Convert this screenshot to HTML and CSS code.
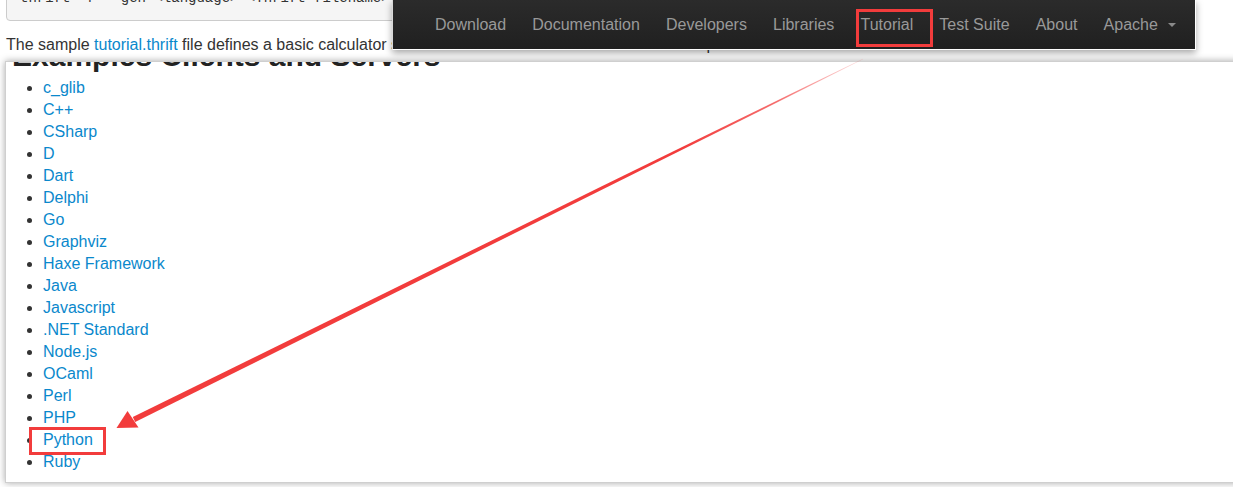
FILE: index.html
```html
<!DOCTYPE html>
<html lang="en">
<head>
<meta charset="utf-8">
<title>Thrift Tutorial</title>
<link rel="stylesheet" href="styles.css">
</head>
<body>
<div class="page">
  <div class="doc">
    <pre class="cmd">thrift -r --gen &lt;language&gt; &lt;Thrift filename&gt;</pre>
    <p class="intro">The sample <a href="#">tutorial.thrift</a> file defines a basic calculator service. The client and server code below implement it.</p>
  </div>

  <section class="panel">
    <h2 class="panel-title">Examples Clients and Servers</h2>
    <ul class="langs">
      <li><a href="#">c_glib</a></li>
      <li><a href="#">C++</a></li>
      <li><a href="#">CSharp</a></li>
      <li><a href="#">D</a></li>
      <li><a href="#">Dart</a></li>
      <li><a href="#">Delphi</a></li>
      <li><a href="#">Go</a></li>
      <li><a href="#">Graphviz</a></li>
      <li><a href="#">Haxe Framework</a></li>
      <li><a href="#">Java</a></li>
      <li><a href="#">Javascript</a></li>
      <li><a href="#">.NET Standard</a></li>
      <li><a href="#">Node.js</a></li>
      <li><a href="#">OCaml</a></li>
      <li><a href="#">Perl</a></li>
      <li><a href="#">PHP</a></li>
      <li><a href="#">Python</a></li>
      <li><a href="#">Ruby</a></li>
    </ul>
  </section>

  <nav class="navbar">
    <a class="nav-link" href="#">Download</a>
    <a class="nav-link" href="#">Documentation</a>
    <a class="nav-link" href="#">Developers</a>
    <a class="nav-link" href="#">Libraries</a>
    <a class="nav-link" href="#">Tutorial</a>
    <a class="nav-link" href="#">Test Suite</a>
    <a class="nav-link" href="#">About</a>
    <a class="nav-link nav-dropdown" href="#">Apache<span class="caret"></span></a>
  </nav>

  <svg class="annot" width="1233" height="487" viewBox="0 0 1233 487" aria-hidden="true">
    <defs>
      <linearGradient id="fade" gradientUnits="userSpaceOnUse" x1="863" y1="59" x2="134" y2="420">
        <stop offset="0" stop-color="#f23c3c" stop-opacity="0.15"/>
        <stop offset="0.12" stop-color="#f23c3c" stop-opacity="0.75"/>
        <stop offset="0.25" stop-color="#f23c3c" stop-opacity="1"/>
        <stop offset="1" stop-color="#f23c3c" stop-opacity="1"/>
      </linearGradient>
    </defs>
    <rect x="857.5" y="10.5" width="74" height="35" fill="none" stroke="#f23c3c" stroke-width="3"/>
    <rect x="30.5" y="428.5" width="74" height="25" fill="none" stroke="#f23c3c" stroke-width="3"/>
    <polygon fill="url(#fade)" points="862.9,58.8 789.96,94.2 600.80,186.8 132.8,417.04 135.2,421.96 602.40,189.6 790.84,95.6 863.1,59.2"/>
    <polygon fill="#f23c3c" points="116.5,428 138.5,427.5 127.5,411"/>
  </svg>
</div>
</body>
</html>
```

FILE: styles.css
```css
html, body {
  margin: 0;
  padding: 0;
  background: #ffffff;
  overflow: hidden;
}

body {
  font-family: "Liberation Sans", Arial, sans-serif;
  font-size: 16px;
  line-height: 22px;
  color: #333333;
}

a {
  color: #0a88cc;
  text-decoration: none;
}

.page {
  position: relative;
  width: 1233px;
  height: 487px;
  overflow: hidden;
}

.doc {
  padding-left: 6px;
}

.cmd {
  margin: -23px 0 0 0;
  width: 1150px;
  padding: 10px 13px 12px 13px;
  font-family: "Liberation Mono", "Courier New", monospace;
  font-size: 14px;
  line-height: 20px;
  color: #333333;
  background: #f5f5f5;
  border: 1px solid #cccccc;
  border-radius: 4px;
  box-sizing: border-box;
  white-space: pre;
}

.intro {
  margin: 13px 0 5px 0;
  white-space: nowrap;
}

.panel {
  margin-left: 5px;
  margin-right: -20px;
  background: #ffffff;
  border: 1px solid #cfcfcf;
  box-shadow: 0 0 7px rgba(0, 0, 0, 0.35);
  overflow: hidden;
  padding: 0 0 0 6px;
}

.panel-title {
  margin: -23px 0 0 0;
  font-size: 30px;
  line-height: 33px;
  font-weight: bold;
  color: #222222;
}

.langs {
  margin: 5px 0 9px 0;
  padding-left: 31px;
  list-style: disc;
}

.langs li {
  line-height: 22px;
}

.navbar {
  position: absolute;
  top: 0;
  left: 392px;
  width: 802px;
  height: 49px;
  box-sizing: content-box;
  display: flex;
  align-items: flex-start;
  gap: 26.1px;
  background: linear-gradient(#2b2b2b, #202020);
  border-left: 1px solid #d8d8d8;
  border-right: 1px solid #ffffff;
  border-bottom: 1px solid #ffffff;
  box-shadow: 0 3px 7px rgba(0, 0, 0, 0.35);
}

.nav-link {
  color: #999999;
  font-size: 16px;
  line-height: 20px;
  padding-top: 15px;
  white-space: nowrap;
}

.nav-link:first-child {
  margin-left: 42px;
}

.nav-dropdown {
  display: flex;
  align-items: flex-start;
}

.caret {
  display: inline-block;
  width: 0;
  height: 0;
  margin-left: 10px;
  margin-top: 8px;
  border-left: 4.5px solid transparent;
  border-right: 4.5px solid transparent;
  border-top: 4.5px solid #8a8a8a;
}

.annot {
  position: absolute;
  top: 0;
  left: 0;
  pointer-events: none;
}
```
